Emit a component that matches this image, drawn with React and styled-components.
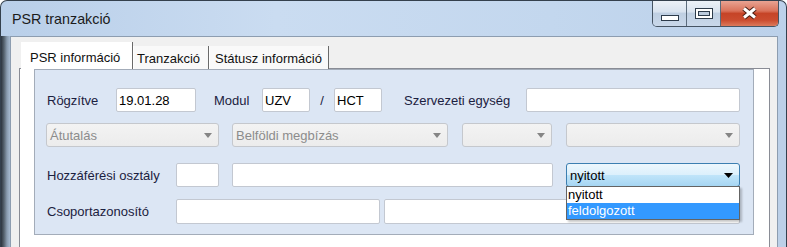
import styled, { createGlobalStyle } from "styled-components";

const GlobalStyle = createGlobalStyle`
  html, body {
    margin: 0;
    padding: 0;
    background: #ffffff;
  }
  body {
    font-family: "Liberation Sans", Arial, sans-serif;
  }
`;

const Window = styled.div`
  width: 787px;
  height: 247px;
  box-sizing: border-box;
  border: 1px solid #34404d;
  border-bottom: none;
  border-radius: 7px 7px 0 0;
  overflow: hidden;
  display: flex;
  flex-direction: column;
  background: linear-gradient(90deg, #b9cfe9 0%, #cadcf1 35%, #c3d7ee 70%, #bcd1ea 100%);
`;

const TitleBar = styled.div`
  height: 35px;
  flex: none;
  display: flex;
  align-items: flex-start;
  padding: 0 7px 0 11px;
`;

const Title = styled.div`
  margin-top: 9px;
  font-family: "Liberation Sans", Arial, sans-serif;
  font-size: 14.3px;
  line-height: 18px;
  color: #1b1b1b;
`;

const CaptionGroup = styled.div`
  margin-left: auto;
  margin-top: -1px;
  height: 26px;
  display: flex;
  border: 1px solid #465463;
  border-top: none;
  border-radius: 0 0 5px 5px;
  overflow: hidden;
`;

const CaptionButton = styled.div`
  width: ${({ $w }) => $w}px;
  display: flex;
  align-items: center;
  justify-content: center;
  border-right: ${({ $last }) => ($last ? "none" : "1px solid #5b6b7c")};
  background: ${({ $close }) =>
    $close
      ? "linear-gradient(180deg, #eaa898 0%, #da735b 42%, #c64427 52%, #cb4d30 78%, #dc7a5c 100%)"
      : "linear-gradient(180deg, #edf2f8 0%, #d9e3ef 45%, #bfcfe2 52%, #c9d8ea 100%)"};
`;

const Body = styled.div`
  flex: 1;
  display: flex;
  padding: 0 8px 0 9px;
  background: linear-gradient(90deg, #2c343e 0px, #56636f 3px, #8a9cb0 6px, #a7bbd1 9px, #bcd0e8 10px, #bcd0e8 100%);
`;

const Client = styled.div`
  flex: 1;
  display: flex;
  flex-direction: column;
  border: 1px solid #8d9db0;
  border-bottom: none;
  background: #f0f0f0;
  padding-top: 6px;
`;

const TabStrip = styled.div`
  height: 26px;
  display: flex;
  align-items: flex-end;
  margin: 0 7px -1px 8px;
  padding-left: 2px;
  position: relative;
  z-index: 1;
`;

const Tab = styled.div`
  box-sizing: border-box;
  width: ${({ $w }) => $w}px;
  height: ${({ $active }) => ($active ? 27 : 23)}px;
  padding-left: ${({ $pad }) => $pad}px;
  padding-top: ${({ $active }) => ($active ? 3 : 1)}px;
  display: flex;
  align-items: center;
  font-size: 13px;
  color: #111;
  white-space: nowrap;
  background: ${({ $active }) => ($active ? "#ffffff" : "#f9f9f9")};
  border-right: 1px solid #6a6a6a;
  box-shadow: ${({ $active }) => ($active ? "none" : "inset 1px 0 0 #ffffff")};
`;

const TabPage = styled.div`
  flex: 1;
  margin: 0 7px 0 8px;
  border: 1px solid #898c95;
  border-bottom: none;
  background: #ffffff;
  padding: 0 15px 0 14px;
`;

const Panel = styled.div`
  background: #dce6f4;
  border: 1px solid #a3acb9;
  padding: 18px 0 10px 12px;
`;

const Row = styled.div`
  display: flex;
  align-items: center;
  height: ${({ $h }) => $h || 24}px;
  margin-top: ${({ $top }) => $top || 0}px;
`;

const Label = styled.div`
  width: ${({ $w }) => $w}px;
  margin-left: ${({ $ml }) => $ml || 0}px;
  flex: none;
  font-size: 13px;
  color: #1b2140;
  white-space: nowrap;
`;

const TextBox = styled.input`
  box-sizing: border-box;
  width: ${({ $w }) => $w}px;
  height: 100%;
  margin: 0 0 0 ${({ $ml }) => $ml || 0}px;
  padding: 1px 2px 0;
  flex: none;
  border: 1px solid #c3c8d1;
  border-radius: 2px;
  background: #ffffff;
  font-family: "Liberation Sans", Arial, sans-serif;
  font-size: 13px;
  color: #000;
  outline: none;
`;

const Slash = styled.div`
  width: 24px;
  flex: none;
  text-align: center;
  font-size: 13px;
  color: #1b2140;
`;

const Combo = styled.div`
  position: relative;
  box-sizing: border-box;
  width: ${({ $w }) => $w}px;
  height: 100%;
  margin-left: ${({ $ml }) => $ml || 0}px;
  flex: none;
  display: flex;
  align-items: center;
  justify-content: space-between;
  padding: 1px 6px 0 3px;
  border-radius: 3px;
  font-size: 13px;
  white-space: nowrap;
  border: 1px solid ${({ $open }) => ($open ? "#3c7fb1" : "#c5c8cd")};
  color: ${({ $open }) => ($open ? "#000" : "#8c8c8c")};
  background: ${({ $open }) =>
    $open
      ? "linear-gradient(180deg, #edf7fd 0%, #dcf0fc 48%, #bfe4f9 52%, #a6d6f3 100%)"
      : "linear-gradient(180deg, #f3f3f3 0%, #ececec 100%)"};
`;

const DropList = styled.div`
  position: absolute;
  top: 100%;
  left: -1px;
  right: -1px;
  z-index: 5;
  background: #ffffff;
  border: 1px solid #646464;
  box-shadow: 2px 2px 2px rgba(0, 0, 0, 0.22);
`;

const DropItem = styled.div`
  height: 16px;
  line-height: 16px;
  padding-left: 1px;
  font-size: 13px;
  color: ${({ $selected }) => ($selected ? "#ffffff" : "#000")};
  background: ${({ $selected }) => ($selected ? "#3399ff" : "#ffffff")};
`;

const Arrow = ({ color, w = 8 }) => (
  <svg width={w} height="5" viewBox={`0 0 ${w} 5`}>
    <path d={`M0 0H${w}L${w / 2} 5Z`} fill={color} />
  </svg>
);

const MinimizeGlyph = () => (
  <svg width="18" height="6" viewBox="0 0 18 6" style={{ marginTop: 9 }}>
    <rect x="0.5" y="0.5" width="17" height="5" fill="#ffffff" stroke="#2d3b4b" />
  </svg>
);

const MaximizeGlyph = () => (
  <svg width="18" height="11" viewBox="0 0 18 11">
    <rect x="0.5" y="0.5" width="17" height="10" fill="#ffffff" stroke="#2d3b4b" />
    <rect x="3.5" y="3.5" width="11" height="4" fill="#bccbdd" stroke="#2d3b4b" />
  </svg>
);

const CloseGlyph = () => (
  <svg width="17" height="14" viewBox="0 0 17 14">
    <path d="M3 2.5L14 11.5M14 2.5L3 11.5" stroke="#4a1c12" strokeWidth="5" />
    <path d="M3 2.5L14 11.5M14 2.5L3 11.5" stroke="#ffffff" strokeWidth="3" />
  </svg>
);

export default function App() {
  return (
    <>
      <GlobalStyle />
      <Window>
        <TitleBar>
          <Title>PSR tranzakció</Title>
          <CaptionGroup>
            <CaptionButton $w={33}>
              <MinimizeGlyph />
            </CaptionButton>
            <CaptionButton $w={33}>
              <MaximizeGlyph />
            </CaptionButton>
            <CaptionButton $w={57} $close $last>
              <CloseGlyph />
            </CaptionButton>
          </CaptionGroup>
        </TitleBar>
        <Body>
          <Client>
            <TabStrip>
              <Tab $w={112} $pad={9} $active>
                PSR információ
              </Tab>
              <Tab $w={76} $pad={4}>
                Tranzakció
              </Tab>
              <Tab $w={120} $pad={6}>
                Státusz információ
              </Tab>
            </TabStrip>
            <TabPage>
              <Panel>
                <Row>
                  <Label $w={69}>Rögzítve</Label>
                  <TextBox $w={80} readOnly defaultValue="19.01.28" />
                  <Label $w={48} $ml={18}>
                    Modul
                  </Label>
                  <TextBox $w={48} readOnly defaultValue="UZV" />
                  <Slash>/</Slash>
                  <TextBox $w={48} readOnly defaultValue="HCT" />
                  <Label $w={122} $ml={22}>
                    Szervezeti egység
                  </Label>
                  <TextBox $w={214} readOnly defaultValue="" />
                </Row>
                <Row $top={11}>
                  <Combo $w={173} $ml={-1}>
                    Átutalás
                    <Arrow color="#858585" />
                  </Combo>
                  <Combo $w={216} $ml={13}>
                    Belföldi megbízás
                    <Arrow color="#858585" />
                  </Combo>
                  <Combo $w={90} $ml={14}>
                    <span />
                    <Arrow color="#858585" />
                  </Combo>
                  <Combo $w={174} $ml={14}>
                    <span />
                    <Arrow color="#858585" />
                  </Combo>
                </Row>
                <Row $top={16}>
                  <Label $w={129}>Hozzáférési osztály</Label>
                  <TextBox $w={43} readOnly defaultValue="" />
                  <TextBox $w={321} $ml={13} readOnly defaultValue="" />
                  <Combo $w={174} $ml={13} $open>
                    nyitott
                    <Arrow color="#000000" w={9} />
                    <DropList>
                      <DropItem>nyitott</DropItem>
                      <DropItem $selected>feldolgozott</DropItem>
                    </DropList>
                  </Combo>
                </Row>
                <Row $top={12} $h={25}>
                  <Label $w={129}>Csoportazonosító</Label>
                  <TextBox $w={204} readOnly defaultValue="" />
                  <TextBox $w={356} $ml={4} readOnly defaultValue="" />
                </Row>
              </Panel>
            </TabPage>
          </Client>
        </Body>
      </Window>
    </>
  );
}
